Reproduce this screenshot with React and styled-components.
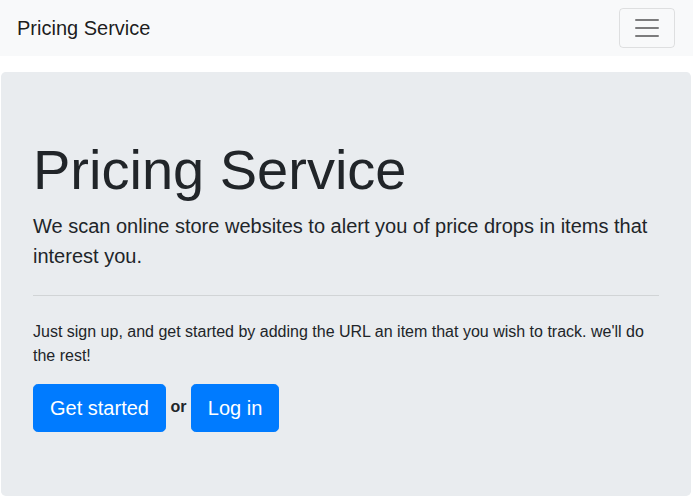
import styled, { createGlobalStyle } from "styled-components";

const GlobalStyle = createGlobalStyle`
  body {
    margin: 0;
    font-family: "Liberation Sans", Arial, sans-serif;
    font-size: 16px;
    line-height: 1.5;
    color: #212529;
    background: #fff;
  }
  * { box-sizing: border-box; }
`

const Navbar = styled.nav`
  display: flex;
  align-items: center;
  justify-content: space-between;
  padding: 8px 18px 8px 17px;
  background: #f8f9fa;
  margin-bottom: 16px;
`

const Brand = styled.a`
  font-size: 20px;
  line-height: 30px;
  padding: 5px 0;
  color: rgba(0, 0, 0, .9);
  text-decoration: none;
`

const Toggler = styled.button`
  display: flex;
  align-items: center;
  justify-content: center;
  padding: 4px 12px;
  width: 56px;
  height: 40px;
  background: transparent;
  border: 1px solid rgba(0, 0, 0, .1);
  border-radius: 4px;
`

const Jumbotron = styled.section`
  margin: 0 2px 32px 1px;
  padding: 64px 32px;
  background: #e9ecef;
  border-radius: 4.8px;
`

const Display = styled.h1`
  margin: 0 0 8px;
  font-size: 56px;
  font-weight: 300;
  line-height: 1.2;
`

const Lead = styled.p`
  margin: 0 0 16px;
  font-size: 20px;
  font-weight: 300;
  line-height: 1.5;
`

const Rule = styled.hr`
  margin: 24px 0;
  border: 0;
  border-top: 1px solid rgba(0, 0, 0, .1);
`

const Text = styled.p`
  margin: 0 0 16px;
`

const Actions = styled.p`
  margin: 0;
`

const Button = styled.a`
  display: inline-block;
  vertical-align: middle;
  padding: 8px 16px;
  font-size: 20px;
  line-height: 1.5;
  color: #fff;
  background: #007bff;
  border: 1px solid #007bff;
  border-radius: 4.8px;
  text-decoration: none;
`

export default function App() {
  return (
    <>
      <GlobalStyle />
      <Navbar>
        <Brand href="#">Pricing Service</Brand>
        <Toggler aria-label="Toggle navigation">
          <svg width="30" height="30" viewBox="0 0 30 30">
            <path d="M4 7h22M4 15h22M4 23h22" stroke="rgba(0,0,0,.5)" strokeWidth="2" strokeLinecap="round" />
          </svg>
        </Toggler>
      </Navbar>
      <Jumbotron>
        <Display>Pricing Service</Display>
        <Lead>We scan online store websites to alert you of price drops in items that interest you.</Lead>
        <Rule />
        <Text>Just sign up, and get started by adding the URL an item that you wish to track. we'll do the rest!</Text>
        <Actions>
          <Button href="#">Get started</Button> <b>or</b> <Button href="#">Log in</Button>
        </Actions>
      </Jumbotron>
    </>
  )
}
